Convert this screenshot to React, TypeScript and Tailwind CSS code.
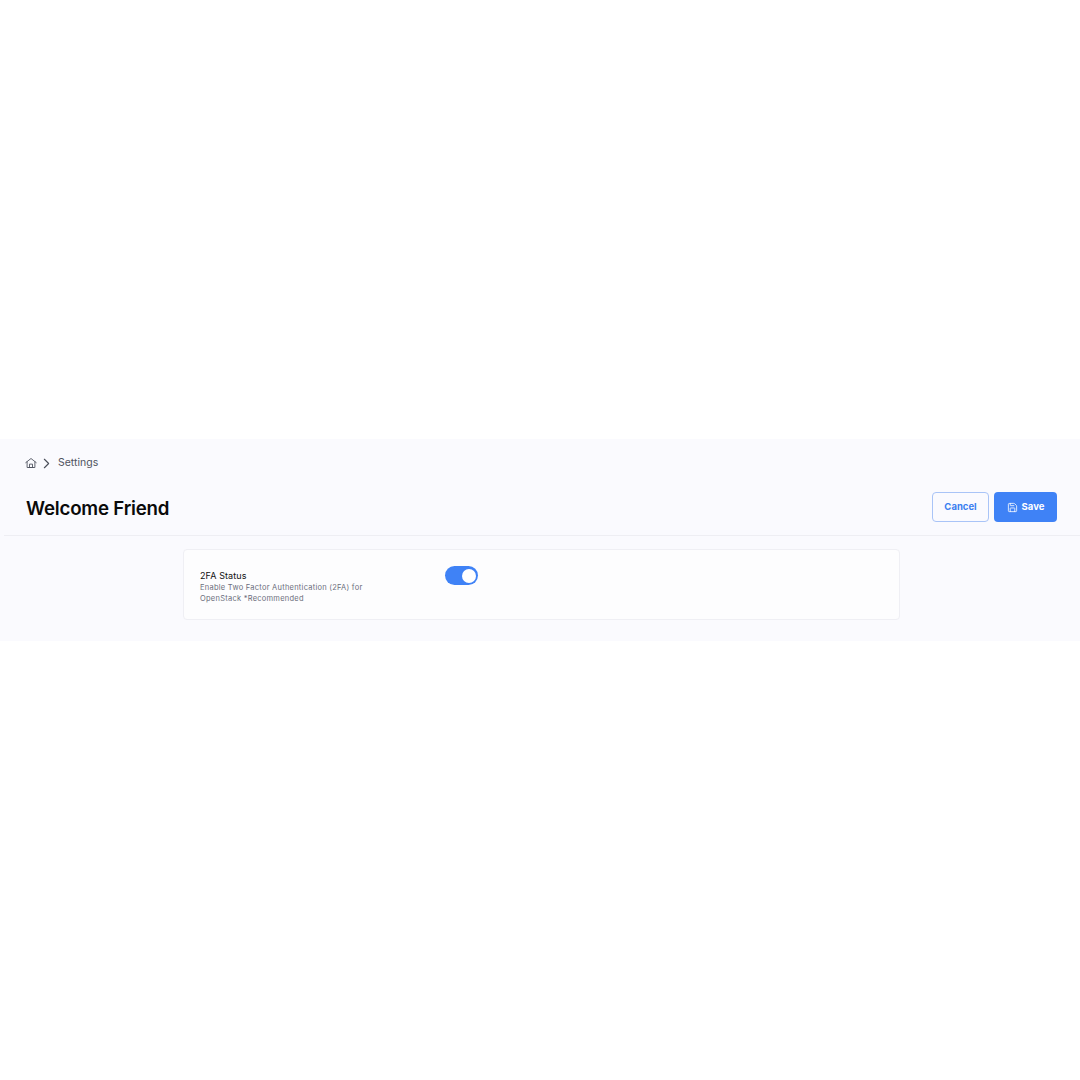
import React from 'react'
import { ChevronRight, Save } from 'lucide-react'

const font = { fontFamily: 'Inter, "Noto Sans", sans-serif' }

const HomeIcon = () => (
    <svg width="12" height="12" viewBox="0 0 16 16" fill="none" stroke="currentColor" strokeWidth="1.2" strokeLinecap="round" strokeLinejoin="round">
        <path d="M1 7.5 8 2l7 5.5" />
        <path d="M2.8 6.5v7.5h10.4V6.5" />
        <path d="M6 14V9.5h4V14" />
        <path d="M5 14h6" />
    </svg>
)

const App = () => {
    return (
        <div style={font} className="flex min-h-screen flex-col justify-center bg-white">
            <div className="h-[202px] bg-[#fafafe]">
                <div className="flex h-[47px] items-center pl-[25px] pt-[1px] text-[#4f5360]">
                    <HomeIcon />
                    <ChevronRight size={17} strokeWidth={1.6} className="ml-[1px] text-[#4b4f5a]" />
                    <span className="ml-[3px] text-[10.5px]">Settings</span>
                </div>
                <div className="ml-[4px] flex h-[50px] items-center justify-between border-b border-[#eeeef3] pb-[7px] pl-[22px] pr-[23px]">
                    <h1 className="pt-[5px] text-[18.7px] font-semibold tracking-[-0.2px] text-[#0a0a0a]">Welcome Friend</h1>
                    <div className="flex gap-[5px]">
                        <button className="flex h-[30px] w-[57px] items-center justify-center rounded-[4px] border border-[#a9c4f7] pt-[1px] text-[9.5px] font-bold text-[#3b7ff0]">
                            Cancel
                        </button>
                        <button className="flex h-[30px] w-[63px] items-center justify-center gap-[4px] rounded-[4px] bg-[#3f82f6] pt-[1px] text-[9.5px] font-bold text-white">
                            <Save size={11} strokeWidth={1.75} />
                            Save
                        </button>
                    </div>
                </div>
                <div className="ml-[183px] mt-[13px] flex h-[71px] w-[717px] items-start rounded-[4px] border border-[#efeff4] bg-[#fdfdfe] pl-[16px] pt-[16px]">
                    <div className="w-[245px]">
                        <h3 className="text-[9px] leading-[19px] tracking-[0.1px] text-[#111111]">2FA Status</h3>
                        <p className="-mt-[3px] w-[175px] text-[7.5px] leading-[11px] tracking-[0.25px] text-[#6b6d7c]">
                            Enable Two Factor Authentication (2FA) for OpenStack *Recommended
                        </p>
                    </div>
                    <div className="flex h-[19px] w-[33px] items-center justify-end rounded-full bg-[#3f82f6] pr-[2px]">
                        <span className="size-[14px] rounded-full bg-white" />
                    </div>
                </div>
            </div>
        </div>
    )
}

export default App
